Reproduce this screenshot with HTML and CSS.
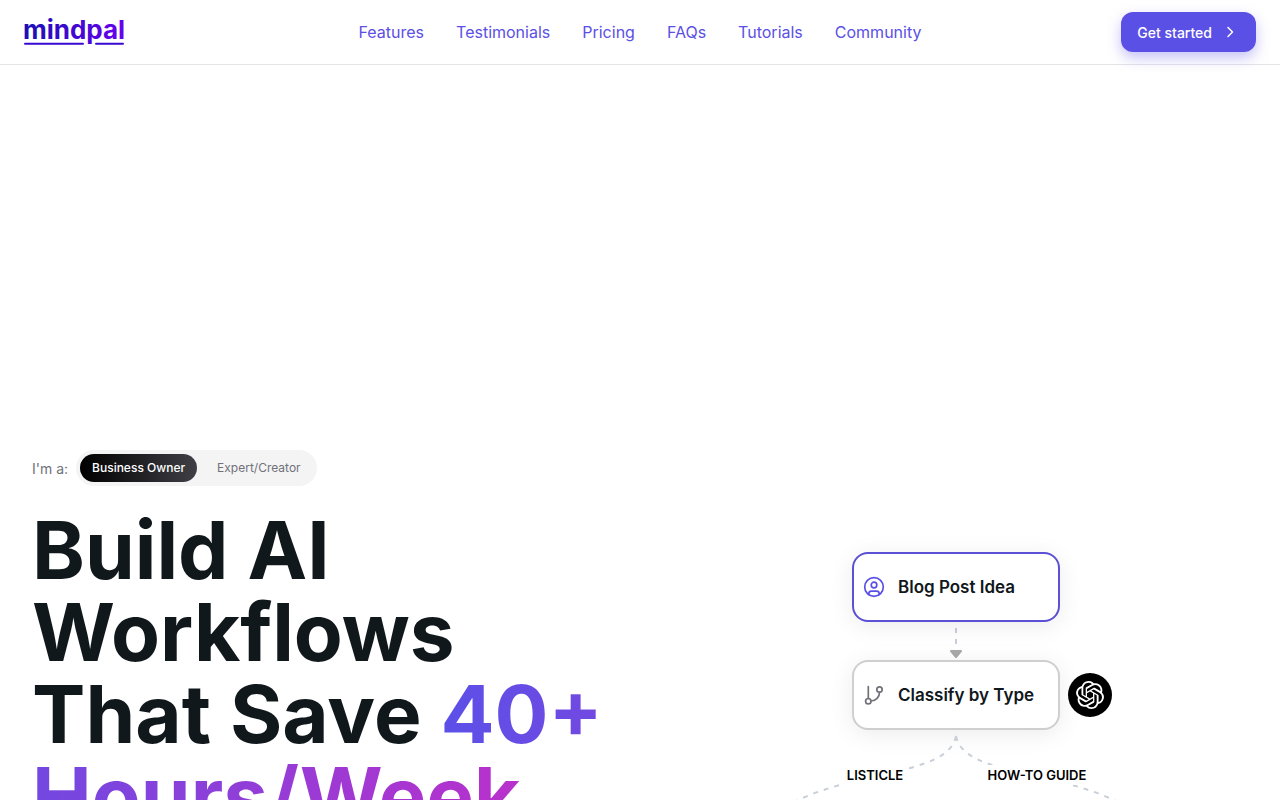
FILE: index.html
```html
<!DOCTYPE html>
<html lang="en">
<head>
    <meta charset="UTF-8">
    <meta name="viewport" content="width=device-width, initial-scale=1.0">
    <title>MindPal</title>
    <link rel="stylesheet" href="styles.css">
</head>
<body>
    <header class="header">
        <a href="#" class="logo">
            <svg width="102" height="32" viewBox="0 0 102 32">
                <defs>
                    <linearGradient id="logoGradient" gradientUnits="userSpaceOnUse" x1="0" y1="0" x2="102" y2="0">
                        <stop offset="0" stop-color="#1a0fb4"/>
                        <stop offset="1" stop-color="#6a00f0"/>
                    </linearGradient>
                </defs>
                <text class="logo-text" x="-1" y="23" fill="url(#logoGradient)">mindpal</text>
                <path d="M1 27.800H59M72 27.800H99" stroke="#3a08d0" stroke-width="2" stroke-linecap="round"/>
            </svg>
        </a>
        <nav class="nav">
            <a href="#features">Features</a>
            <a href="#testimonials">Testimonials</a>
            <a href="#pricing">Pricing</a>
            <a href="#faqs">FAQs</a>
            <a href="#tutorials">Tutorials</a>
            <a href="#community">Community</a>
        </nav>
        <div class="header-action">
            <button type="button" class="start-btn">
                Get started
                <svg width="20" height="20" viewBox="0 0 20 20" fill="none" stroke="currentColor" stroke-width="1.500" stroke-linecap="round" stroke-linejoin="round">
                    <path d="M8 5.500L12.500 10L8 14.500"/>
                </svg>
            </button>
        </div>
    </header>

    <main class="hero">
        <section class="intro">
            <div class="role">
                <span class="role-label">I'm a:</span>
                <div class="role-switch">
                    <button type="button" class="role-btn active">Business Owner</button>
                    <button type="button" class="role-btn">Expert/Creator</button>
                </div>
            </div>
            <h1>Build AI<br>Workflows<br>That Save <span class="highlight">40+<br>Hours/Week</span></h1>
        </section>

        <section class="flow">
            <div class="node node-input">
                <svg width="24" height="24" viewBox="0 0 24 24" fill="none" stroke="currentColor" stroke-width="1.700" stroke-linecap="round" stroke-linejoin="round">
                    <circle cx="12" cy="12" r="9.300"/>
                    <circle cx="12" cy="10" r="2.800"/>
                    <path d="M6.800 19.500V18.500A2.500 2.500 0 0 1 9.300 16.200H14.700A2.500 2.500 0 0 1 17.200 18.500V19.500"/>
                </svg>
                Blog Post Idea
            </div>
            <svg class="arrow" width="16" height="38" viewBox="0 0 16 38">
                <path d="M8 6V27" stroke="#c8cfd8" stroke-width="2" stroke-dasharray="5 6"/>
                <path d="M3 29H13L8 35Z" fill="#a9a9a9" stroke="#a9a9a9" stroke-width="2" stroke-linejoin="round"/>
            </svg>
            <div class="node">
                <svg width="24" height="24" viewBox="0 0 24 24" fill="none" stroke="currentColor" stroke-width="1.700" stroke-linecap="round" stroke-linejoin="round">
                    <path d="M6.300 3.500V15.500M17.500 9.500C17.500 14 14 18 9 18"/>
                    <circle cx="6.300" cy="18.200" r="2.700"/>
                    <circle cx="17.500" cy="6.500" r="2.700"/>
                </svg>
                Classify by Type
                <span class="model">
                    <svg width="28" height="28" viewBox="0 0 24 24" fill="#fff">
                        <path d="M22.282 9.821a5.985 5.985 0 0 0-.516-4.910 6.046 6.046 0 0 0-6.510-2.900A6.065 6.065 0 0 0 4.981 4.182a5.985 5.985 0 0 0-3.998 2.900 6.046 6.046 0 0 0 .743 7.097 5.980 5.980 0 0 0 .510 4.911 6.051 6.051 0 0 0 6.515 2.900A5.985 5.985 0 0 0 13.260 24a6.056 6.056 0 0 0 5.772-4.206 5.990 5.990 0 0 0 3.998-2.900 6.056 6.056 0 0 0-.747-7.073zM13.260 22.430a4.476 4.476 0 0 1-2.876-1.040l.141-.081 4.779-2.758a.795.795 0 0 0 .393-.681v-6.737l2.020 1.169a.071.071 0 0 1 .038.052v5.583a4.504 4.504 0 0 1-4.495 4.493zM3.600 18.304a4.471 4.471 0 0 1-.535-3.014l.142.085 4.783 2.758a.771.771 0 0 0 .780 0l5.843-3.368v2.332a.080.080 0 0 1-.033.062L9.740 19.950a4.500 4.500 0 0 1-6.140-1.646zM2.341 7.896a4.485 4.485 0 0 1 2.366-1.973V11.600a.766.766 0 0 0 .388.677l5.814 3.354-2.020 1.169a.076.076 0 0 1-.071 0l-4.830-2.787A4.504 4.504 0 0 1 2.341 7.872zM18.938 11.751l-5.833-3.387L15.119 7.200a.076.076 0 0 1 .071 0l4.830 2.791a4.494 4.494 0 0 1-.676 8.105v-5.678a.790.790 0 0 0-.407-.667zM20.948 8.728l-.142-.085-4.773-2.782a.776.776 0 0 0-.785 0L9.409 9.230V6.897a.066.066 0 0 1 .028-.061l4.830-2.787a4.500 4.500 0 0 1 6.680 4.660zM8.307 12.863l-2.020-1.164a.080.080 0 0 1-.038-.057V6.075a4.500 4.500 0 0 1 7.376-3.453l-.142.080-4.778 2.758a.795.795 0 0 0-.393.682zM9.404 10.498l2.602-1.500 2.607 1.500v2.999l-2.597 1.500-2.607-1.500z"/>
                    </svg>
                </span>
            </div>
            <div class="branches">
                <svg width="352" height="96" viewBox="0 0 352 96" fill="none" stroke="#c8cfd8" stroke-width="2" stroke-dasharray="5 6">
                    <path d="M176 6C168 48 66 38 0 80"/>
                    <path d="M176 6C184 48 286 38 352 80"/>
                </svg>
                <span class="branch-label branch-left">LISTICLE</span>
                <span class="branch-label branch-right">HOW-TO GUIDE</span>
            </div>
        </section>
    </main>
</body>
</html>
```
FILE: styles.css
```css
* {
    box-sizing: border-box;
}

body {
    margin: 0;
    height: 100vh;
    overflow: hidden;
    font-family: Inter, sans-serif;
    color: #11181c;
    background-color: #fff;
}

button {
    font-family: inherit;
    border: none;
    cursor: pointer;
}

.header {
    display: grid;
    grid-template-columns: 1fr auto 1fr;
    align-items: center;
    height: 65px;
    padding: 0 24px;
    border-bottom: 1px solid #e5e5e8;
}

.logo svg {
    display: block;
    overflow: visible;
}

.logo-text {
    font-size: 26px;
    font-weight: 700;
}

.nav {
    display: flex;
    gap: 32px;
}

.nav a {
    font-size: 16px;
    line-height: 24px;
    color: #5b50e5;
    text-decoration: none;
}

.header-action {
    display: flex;
    justify-content: flex-end;
}

.start-btn {
    display: flex;
    align-items: center;
    gap: 8px;
    height: 40px;
    padding: 0 16px;
    border-radius: 12px;
    background-color: #5b50e5;
    color: #fff;
    font-size: 14px;
    font-weight: 500;
    box-shadow: 0 6px 14px rgba(91, 80, 229, 0.35);
}

.hero {
    display: grid;
    grid-template-columns: 1fr 1fr;
    gap: 48px;
    padding: 385px 32px 0;
}

.role {
    display: flex;
    align-items: center;
    gap: 8px;
    margin-bottom: 23px;
}

.role-label {
    font-size: 14px;
    color: #71717a;
}

.role-switch {
    display: flex;
    gap: 8px;
    padding: 4px;
    border-radius: 18px;
    background-color: #f4f4f5;
}

.role-btn {
    height: 28px;
    padding: 0 12px 2px;
    border-radius: 14px;
    background: none;
    color: #71717a;
    font-size: 12px;
}

.role-btn.active {
    background: linear-gradient(90deg, #000, #3f3f46);
    color: #fff;
    font-weight: 500;
}

h1 {
    margin: 0;
    font-size: 80px;
    line-height: 82px;
    font-weight: 700;
    white-space: nowrap;
}

.highlight {
    background: linear-gradient(90deg, #5b50e8, #b930cc);
    background-clip: text;
    -webkit-background-clip: text;
    color: transparent;
}

.flow {
    display: flex;
    flex-direction: column;
    align-items: center;
    padding-top: 102px;
}

.node {
    position: relative;
    display: flex;
    align-items: center;
    gap: 12px;
    width: 208px;
    height: 70px;
    padding: 0 8px;
    border: 2px solid #cfcfcf;
    border-radius: 16px;
    background-color: #fff;
    box-shadow: 0 4px 24px rgba(0, 0, 0, 0.08);
    font-size: 17px;
    font-weight: 600;
    white-space: nowrap;
}

.node svg {
    flex: none;
    color: #71717a;
}

.node-input {
    border-color: #5b50d6;
}

.node-input svg {
    color: #5b50e5;
}

/* model badge beside the node */
.model {
    position: absolute;
    left: 100%;
    top: 50%;
    display: flex;
    align-items: center;
    justify-content: center;
    width: 44px;
    height: 44px;
    margin: -22px 0 0 10px;
    border-radius: 50%;
    background-color: #000;
}

.branches {
    position: relative;
}

.branches svg {
    display: block;
}

.branch-label {
    position: absolute;
    top: 35px;
    padding: 0 6px;
    background-color: #fff;
    color: #000;
    font-size: 13px;
    line-height: 20px;
    font-weight: 600;
    white-space: nowrap;
    transform: translateX(-50%);
}

.branch-left {
    left: 27%;
}

.branch-right {
    left: 73%;
}
```
